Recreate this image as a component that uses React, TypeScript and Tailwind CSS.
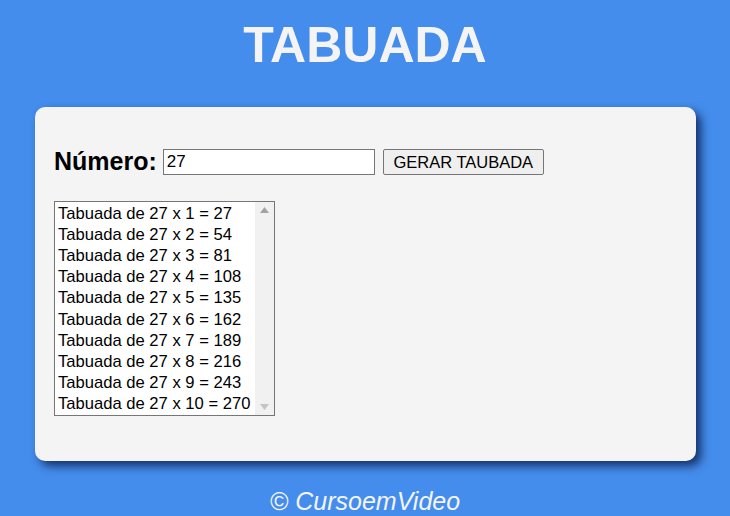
const ROWS = Array.from({ length: 10 }, (_, i) => i + 1);

export default function App() {
  const n = 27;

  return (
    <div className="min-h-screen bg-[#448dec] pt-[15px] font-['Liberation_Sans',Arial,sans-serif]">
      <h1 className="text-center text-[50px] font-bold leading-[60px] text-[#f4f4f4]">TABUADA</h1>

      <main className="ml-[35px] mr-[34px] mt-[32px] h-[354px] rounded-[10px] bg-[#f4f4f4] px-[19px] pt-[36px] shadow-[5px_5px_10px_rgba(0,10,50,0.7)]">
        <div className="flex items-center">
          <span className="text-[25px] font-bold text-black">Número:</span>
          <input
            defaultValue={n}
            className="ml-[6px] h-[26px] w-[212px] border border-[#767676] bg-white px-[3px] text-[17px] text-black outline-none"
          />
          <button className="ml-[8px] h-[26px] w-[161px] rounded-[2px] border border-[#767676] bg-[#efefef] text-[16.5px] text-black">
            GERAR TAUBADA
          </button>
        </div>

        <div className="mt-[20px] flex h-[215px] w-[221px] border border-[#767676] bg-white">
          <ul className="flex-1 pl-[3px] pt-[1px] text-[16.6px] leading-[21.2px] text-black">
            {ROWS.map((i) => (
              <li key={i} className="whitespace-nowrap">
                Tabuada de {n} x {i} = {n * i}
              </li>
            ))}
          </ul>
          {/* scrollbar */}
          <div className="flex w-[19px] flex-col items-center justify-between bg-[#f1f1f1] py-[5px]">
            <svg width="9" height="6" viewBox="0 0 9 6">
              <path d="M4.5 0L9 6H0z" fill="#a3a3a3" />
            </svg>
            <svg width="9" height="6" viewBox="0 0 9 6">
              <path d="M0 0h9L4.5 6z" fill="#c4c4c4" />
            </svg>
          </div>
        </div>
      </main>

      <footer className="mt-[22px] text-center text-[25px] italic text-[#f4f4f4]">© CursoemVideo</footer>
    </div>
  );
}
